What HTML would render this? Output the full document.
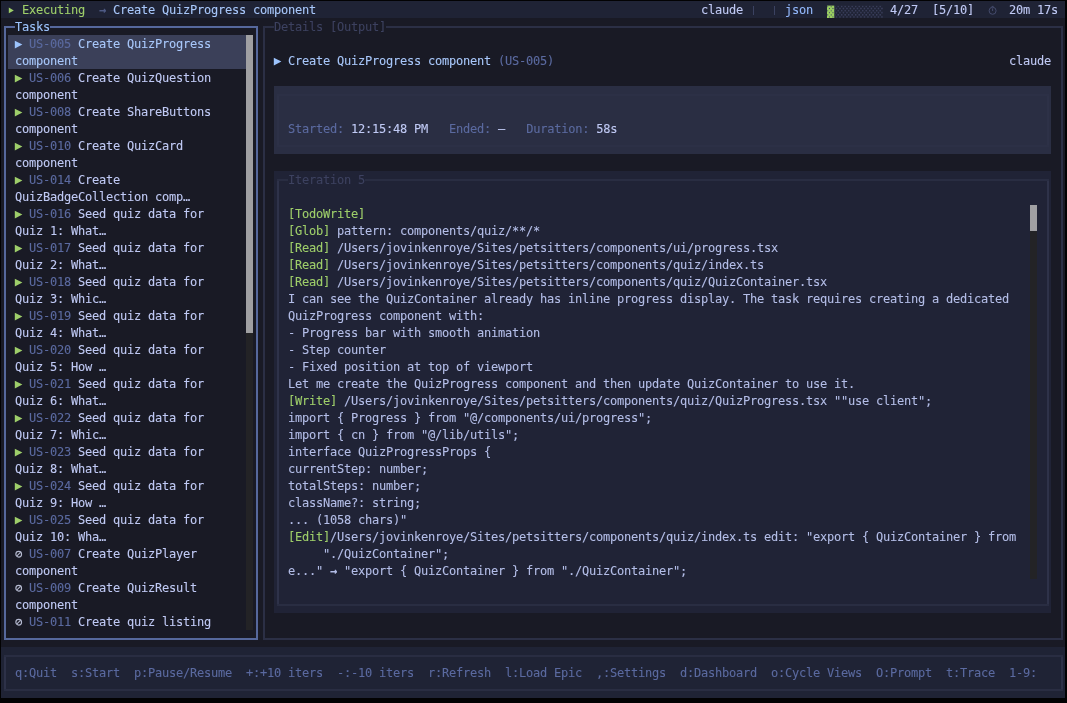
<!DOCTYPE html>
<html lang="en"><head><meta charset="utf-8"><title>ralph-tui</title>
<style>
html,body{margin:0;padding:0;background:#020203;}
body{width:1067px;height:703px;position:relative;overflow:hidden;font-family:"DejaVu Sans Mono","Liberation Mono",monospace;font-size:12px;line-height:17px;letter-spacing:-0.2246px;color:#c0caf5;-webkit-text-stroke:0.1px;font-kerning:none;font-variant-ligatures:none;}
#bg{position:absolute;left:0;top:0;width:1067px;height:703px;}
#w{position:absolute;left:0;top:0;width:1067px;height:703px;will-change:transform;}
.b{position:absolute;}
.t{position:absolute;white-space:pre;height:17px;margin-top:1px;}
.g{color:#9ece6a;}
.d{color:#5b6aa0;}
.d2{color:#3d4260;}
.fg{color:#c0caf5;}
.hl{color:#a8c7fa;}
.bl{color:#93b8fb;}
.lb{color:#9cc3fc;}
.ttl{color:#9cc3fc;}
.i{display:inline-block;width:7px;height:17px;vertical-align:top;}
.i svg{display:block;overflow:visible;margin-top:-1px;}
.ic{display:inline-block;width:7px;height:17px;vertical-align:top;font-size:9px;letter-spacing:0;text-align:center;color:#a9b1d6;}
.arr{color:#4f5b85;font-weight:bold;}
.arr2{font-weight:bold;}
.ck{color:#454c6d;}
.bn{color:#b4b9cf;}
.pipe{display:inline-block;width:7px;height:17px;vertical-align:top;position:relative;}
.pipe:after{content:"";position:absolute;left:3px;top:3.6px;width:1px;height:9.2px;background:#3b4261;}
.pb{display:inline-block;vertical-align:top;margin-top:-1px;}
</style></head>
<body>
<div id="bg">
<div class="b" style="left:1px;top:1px;width:1064px;height:697px;background:#191a25"></div>
<div class="b" style="left:1px;top:1px;width:1064px;height:17px;background:#1f2335"></div>
<div class="b" style="left:1px;top:647px;width:1064px;height:51px;background:#1f2335"></div>
<div class="b" style="left:8px;top:35px;width:238px;height:34px;background:#3b4059"></div>
<div class="b" style="left:246px;top:35px;width:7px;height:595px;background:#232326"></div>
<div class="b" style="left:246px;top:35px;width:7px;height:297.5px;background:#a0a0a3"></div>
<div class="b" style="left:274px;top:86px;width:777px;height:68px;background:#2a2e43"></div>
<div class="b" style="left:274px;top:171px;width:777px;height:442px;background:#202336"></div>
<div class="b" style="left:1030px;top:205px;width:7px;height:374px;background:#232326"></div>
<div class="b" style="left:1030px;top:205px;width:7px;height:25.5px;background:#a0a0a3"></div>
<svg class="b" style="left:0;top:0" shape-rendering="crispEdges" width="1067" height="703" viewBox="0 0 1067 703"><rect x="4" y="26" width="11" height="2" fill="#56689c"/><rect x="50" y="26" width="208" height="2" fill="#56689c"/><rect x="4" y="638" width="254" height="2" fill="#56689c"/><rect x="4" y="28" width="2" height="610" fill="#56689c"/><rect x="256" y="28" width="2" height="610" fill="#56689c"/><rect x="263" y="26" width="11" height="2" fill="#2b2f45"/><rect x="386" y="26" width="677" height="2" fill="#2b2f45"/><rect x="263" y="638" width="800" height="2" fill="#2b2f45"/><rect x="263" y="28" width="2" height="610" fill="#2b2f45"/><rect x="1061" y="28" width="2" height="610" fill="#2b2f45"/><rect x="277" y="94" width="772" height="2" fill="#2c3046"/><rect x="277" y="145" width="772" height="2" fill="#2c3046"/><rect x="277" y="96" width="2" height="49" fill="#2d3147"/><rect x="1047" y="96" width="2" height="49" fill="#2d3147"/><rect x="277" y="179" width="11" height="2" fill="#292d42"/><rect x="365" y="179" width="684" height="2" fill="#292d42"/><rect x="277" y="604" width="772" height="2" fill="#292d42"/><rect x="277" y="181" width="2" height="423" fill="#2e3249"/><rect x="1047" y="181" width="2" height="423" fill="#2e3249"/><rect x="4" y="655" width="1059" height="2" fill="#292d42"/><rect x="4" y="689" width="1059" height="2" fill="#292d42"/><rect x="4" y="657" width="2" height="32" fill="#2d3148"/><rect x="1061" y="657" width="2" height="32" fill="#2d3148"/></svg>
</div>
<div id="w">
<div class="t" style="left:8px;top:1px"><span class="i g"><svg width="7" height="17" viewBox="0 0 7 17"><polygon points="0.8,6.5 5.8,9.4 0.8,12.3" fill="currentColor"/></svg></span> <span class="g">Executing</span>  <span class="arr">→</span> <span class="hl">Create QuizProgress component</span></div>
<div class="t" style="left:701px;top:1px"><span class="fg">claude</span> <span class="pipe"></span>  <span class="pipe"></span> <span class="bl">json</span></div>
<div class="t" style="left:827px;top:1px"><svg class="pb" width="56" height="17" viewBox="0 0 56 17" role="img" aria-label="progress 1 of 8"><defs><pattern id="sh" x="0" y="4.6" width="7" height="4.2" patternUnits="userSpaceOnUse"><circle cx="0.7" cy="0.75" r="0.85" fill="#3b405d"/><circle cx="4.2" cy="0.75" r="0.85" fill="#3b405d"/><circle cx="2.45" cy="2.85" r="0.85" fill="#3b405d"/><circle cx="5.95" cy="2.85" r="0.85" fill="#3b405d"/></pattern><pattern id="sg" x="0" y="4.6" width="7" height="4.2" patternUnits="userSpaceOnUse"><circle cx="0.7" cy="0.75" r="0.62" fill="#3c4468"/><circle cx="4.2" cy="0.75" r="0.62" fill="#3c4468"/><circle cx="2.45" cy="2.85" r="0.62" fill="#3c4468"/><circle cx="5.95" cy="2.85" r="0.62" fill="#3c4468"/></pattern></defs><rect x="0" y="4.6" width="7.3" height="12.5" fill="#9bcf60"/><rect x="0" y="4.6" width="7.3" height="12.5" fill="url(#sg)"/><rect x="7.3" y="4.6" width="48.7" height="12.5" fill="url(#sh)"/></svg> <span class="fg">4/27</span>  <span class="fg">[5/10]</span></div>
<div class="t" style="left:988px;top:1px"><span class="i ck"><svg width="9" height="17" viewBox="0 0 9 17"><circle cx="4.6" cy="9.8" r="3.5" fill="none" stroke="currentColor" stroke-width="1"/><path d="M4.6 7.4V10M3.6 5.4h2" stroke="currentColor" stroke-width="1" fill="none"/></svg></span>  <span class="fg">20m 17s</span></div>
<div class="t" style="left:15px;top:18px"><span class="ttl">Tasks</span></div>
<div class="t" style="left:274px;top:18px"><span class="d2">Details [Output]</span></div>
<div class="t" style="left:288px;top:171px"><span class="d2">Iteration 5</span></div>
<div class="t" style="left:15px;top:35px"><span class="i lb"><svg width="8" height="17" viewBox="0 0 8 17"><polygon points="-0.2,5.8 7.4,9.6 -0.2,13.4" fill="currentColor"/></svg></span> <span class="d">US-005</span> <span class="hl">Create QuizProgress</span></div>
<div class="t" style="left:15px;top:52px"><span class="hl">component</span></div>
<div class="t" style="left:15px;top:69px"><span class="i g"><svg width="8" height="17" viewBox="0 0 8 17"><polygon points="-0.2,5.8 7.4,9.6 -0.2,13.4" fill="currentColor"/></svg></span> <span class="d">US-006</span> <span>Create QuizQuestion</span></div>
<div class="t" style="left:15px;top:86px"><span>component</span></div>
<div class="t" style="left:15px;top:103px"><span class="i g"><svg width="8" height="17" viewBox="0 0 8 17"><polygon points="-0.2,5.8 7.4,9.6 -0.2,13.4" fill="currentColor"/></svg></span> <span class="d">US-008</span> <span>Create ShareButtons</span></div>
<div class="t" style="left:15px;top:120px"><span>component</span></div>
<div class="t" style="left:15px;top:137px"><span class="i g"><svg width="8" height="17" viewBox="0 0 8 17"><polygon points="-0.2,5.8 7.4,9.6 -0.2,13.4" fill="currentColor"/></svg></span> <span class="d">US-010</span> <span>Create QuizCard</span></div>
<div class="t" style="left:15px;top:154px"><span>component</span></div>
<div class="t" style="left:15px;top:171px"><span class="i g"><svg width="8" height="17" viewBox="0 0 8 17"><polygon points="-0.2,5.8 7.4,9.6 -0.2,13.4" fill="currentColor"/></svg></span> <span class="d">US-014</span> <span>Create</span></div>
<div class="t" style="left:15px;top:188px"><span>QuizBadgeCollection comp…</span></div>
<div class="t" style="left:15px;top:205px"><span class="i g"><svg width="8" height="17" viewBox="0 0 8 17"><polygon points="-0.2,5.8 7.4,9.6 -0.2,13.4" fill="currentColor"/></svg></span> <span class="d">US-016</span> <span>Seed quiz data for</span></div>
<div class="t" style="left:15px;top:222px"><span>Quiz 1: What…</span></div>
<div class="t" style="left:15px;top:239px"><span class="i g"><svg width="8" height="17" viewBox="0 0 8 17"><polygon points="-0.2,5.8 7.4,9.6 -0.2,13.4" fill="currentColor"/></svg></span> <span class="d">US-017</span> <span>Seed quiz data for</span></div>
<div class="t" style="left:15px;top:256px"><span>Quiz 2: What…</span></div>
<div class="t" style="left:15px;top:273px"><span class="i g"><svg width="8" height="17" viewBox="0 0 8 17"><polygon points="-0.2,5.8 7.4,9.6 -0.2,13.4" fill="currentColor"/></svg></span> <span class="d">US-018</span> <span>Seed quiz data for</span></div>
<div class="t" style="left:15px;top:290px"><span>Quiz 3: Whic…</span></div>
<div class="t" style="left:15px;top:307px"><span class="i g"><svg width="8" height="17" viewBox="0 0 8 17"><polygon points="-0.2,5.8 7.4,9.6 -0.2,13.4" fill="currentColor"/></svg></span> <span class="d">US-019</span> <span>Seed quiz data for</span></div>
<div class="t" style="left:15px;top:324px"><span>Quiz 4: What…</span></div>
<div class="t" style="left:15px;top:341px"><span class="i g"><svg width="8" height="17" viewBox="0 0 8 17"><polygon points="-0.2,5.8 7.4,9.6 -0.2,13.4" fill="currentColor"/></svg></span> <span class="d">US-020</span> <span>Seed quiz data for</span></div>
<div class="t" style="left:15px;top:358px"><span>Quiz 5: How …</span></div>
<div class="t" style="left:15px;top:375px"><span class="i g"><svg width="8" height="17" viewBox="0 0 8 17"><polygon points="-0.2,5.8 7.4,9.6 -0.2,13.4" fill="currentColor"/></svg></span> <span class="d">US-021</span> <span>Seed quiz data for</span></div>
<div class="t" style="left:15px;top:392px"><span>Quiz 6: What…</span></div>
<div class="t" style="left:15px;top:409px"><span class="i g"><svg width="8" height="17" viewBox="0 0 8 17"><polygon points="-0.2,5.8 7.4,9.6 -0.2,13.4" fill="currentColor"/></svg></span> <span class="d">US-022</span> <span>Seed quiz data for</span></div>
<div class="t" style="left:15px;top:426px"><span>Quiz 7: Whic…</span></div>
<div class="t" style="left:15px;top:443px"><span class="i g"><svg width="8" height="17" viewBox="0 0 8 17"><polygon points="-0.2,5.8 7.4,9.6 -0.2,13.4" fill="currentColor"/></svg></span> <span class="d">US-023</span> <span>Seed quiz data for</span></div>
<div class="t" style="left:15px;top:460px"><span>Quiz 8: What…</span></div>
<div class="t" style="left:15px;top:477px"><span class="i g"><svg width="8" height="17" viewBox="0 0 8 17"><polygon points="-0.2,5.8 7.4,9.6 -0.2,13.4" fill="currentColor"/></svg></span> <span class="d">US-024</span> <span>Seed quiz data for</span></div>
<div class="t" style="left:15px;top:494px"><span>Quiz 9: How …</span></div>
<div class="t" style="left:15px;top:511px"><span class="i g"><svg width="8" height="17" viewBox="0 0 8 17"><polygon points="-0.2,5.8 7.4,9.6 -0.2,13.4" fill="currentColor"/></svg></span> <span class="d">US-025</span> <span>Seed quiz data for</span></div>
<div class="t" style="left:15px;top:528px"><span>Quiz 10: Wha…</span></div>
<div class="t" style="left:15px;top:545px"><span class="i bn"><svg width="8" height="17" viewBox="0 0 8 17"><circle cx="3.7" cy="9.2" r="2.85" fill="none" stroke="currentColor" stroke-width="1.15"/><path d="M1.7 11.2L5.7 7.2" stroke="currentColor" stroke-width="1.1"/></svg></span> <span class="d">US-007</span> <span>Create QuizPlayer</span></div>
<div class="t" style="left:15px;top:562px"><span>component</span></div>
<div class="t" style="left:15px;top:579px"><span class="i bn"><svg width="8" height="17" viewBox="0 0 8 17"><circle cx="3.7" cy="9.2" r="2.85" fill="none" stroke="currentColor" stroke-width="1.15"/><path d="M1.7 11.2L5.7 7.2" stroke="currentColor" stroke-width="1.1"/></svg></span> <span class="d">US-009</span> <span>Create QuizResult</span></div>
<div class="t" style="left:15px;top:596px"><span>component</span></div>
<div class="t" style="left:15px;top:613px"><span class="i bn"><svg width="8" height="17" viewBox="0 0 8 17"><circle cx="3.7" cy="9.2" r="2.85" fill="none" stroke="currentColor" stroke-width="1.15"/><path d="M1.7 11.2L5.7 7.2" stroke="currentColor" stroke-width="1.1"/></svg></span> <span class="d">US-011</span> <span>Create quiz listing</span></div>
<div class="t" style="left:274px;top:52px"><span class="i lb"><svg width="8" height="17" viewBox="0 0 8 17"><polygon points="-0.2,5.8 7.4,9.6 -0.2,13.4" fill="currentColor"/></svg></span> <span class="hl">Create QuizProgress component</span> <span class="d">(US-005)</span></div>
<div class="t" style="left:1009px;top:52px"><span class="fg">claude</span></div>
<div class="t" style="left:288px;top:120px"><span class="d">Started:</span> <span class="fg">12:15:48 PM</span>   <span class="d">Ended:</span> <span class="fg">–</span>   <span class="d">Duration:</span> <span class="fg">58s</span></div>
<div class="t" style="left:288px;top:205px;color:#b4bee8"><span class="g">[TodoWrite]</span></div>
<div class="t" style="left:288px;top:222px;color:#b4bee8"><span class="g">[Glob]</span> pattern: components/quiz/**/*</div>
<div class="t" style="left:288px;top:239px;color:#b4bee8"><span class="g">[Read]</span> /Users/jovinkenroye/Sites/petsitters/components/ui/progress.tsx</div>
<div class="t" style="left:288px;top:256px;color:#b4bee8"><span class="g">[Read]</span> /Users/jovinkenroye/Sites/petsitters/components/quiz/index.ts</div>
<div class="t" style="left:288px;top:273px;color:#b4bee8"><span class="g">[Read]</span> /Users/jovinkenroye/Sites/petsitters/components/quiz/QuizContainer.tsx</div>
<div class="t" style="left:288px;top:290px;color:#b4bee8">I can see the QuizContainer already has inline progress display. The task requires creating a dedicated</div>
<div class="t" style="left:288px;top:307px;color:#b4bee8">QuizProgress component with:</div>
<div class="t" style="left:288px;top:324px;color:#b4bee8">- Progress bar with smooth animation</div>
<div class="t" style="left:288px;top:341px;color:#b4bee8">- Step counter</div>
<div class="t" style="left:288px;top:358px;color:#b4bee8">- Fixed position at top of viewport</div>
<div class="t" style="left:288px;top:375px;color:#b4bee8">Let me create the QuizProgress component and then update QuizContainer to use it.</div>
<div class="t" style="left:288px;top:392px;color:#b4bee8"><span class="g">[Write]</span> /Users/jovinkenroye/Sites/petsitters/components/quiz/QuizProgress.tsx ""use client";</div>
<div class="t" style="left:288px;top:409px;color:#b4bee8">import { Progress } from "@/components/ui/progress";</div>
<div class="t" style="left:288px;top:426px;color:#b4bee8">import { cn } from "@/lib/utils";</div>
<div class="t" style="left:288px;top:443px;color:#b4bee8">interface QuizProgressProps {</div>
<div class="t" style="left:288px;top:460px;color:#b4bee8">currentStep: number;</div>
<div class="t" style="left:288px;top:477px;color:#b4bee8">totalSteps: number;</div>
<div class="t" style="left:288px;top:494px;color:#b4bee8">className?: string;</div>
<div class="t" style="left:288px;top:511px;color:#b4bee8">... (1058 chars)"</div>
<div class="t" style="left:288px;top:528px;color:#b4bee8"><span class="g">[Edit]</span>/Users/jovinkenroye/Sites/petsitters/components/quiz/index.ts edit: "export { QuizContainer } from</div>
<div class="t" style="left:288px;top:545px;color:#b4bee8">     "./QuizContainer";</div>
<div class="t" style="left:288px;top:562px;color:#b4bee8">e..." <span class="arr2">→</span> "export { QuizContainer } from "./QuizContainer";</div>
<div class="t" style="left:15px;top:664px"><span class="d">q:Quit  s:Start  p:Pause/Resume  +:+10 iters  -:-10 iters  r:Refresh  l:Load Epic  ,:Settings  d:Dashboard  o:Cycle Views  O:Prompt  t:Trace  1-9:</span></div>
</div>
</body></html>
